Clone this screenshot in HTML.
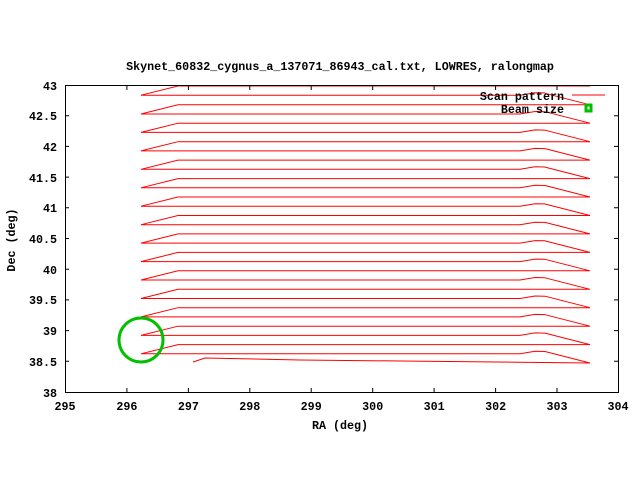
<!DOCTYPE html>
<html><head><meta charset="utf-8"><style>
html,body{margin:0;padding:0;background:#fff;}
svg{display:block}
text{font-family:"Liberation Mono","DejaVu Sans Mono",monospace;font-weight:bold;font-size:11.7px;fill:#000}
</style></head><body>
<svg width="640" height="480" viewBox="0 0 640 480" xmlns="http://www.w3.org/2000/svg">
<defs><clipPath id="c"><rect x="65" y="85" width="553" height="307"/></clipPath>
<path id="w" d="M545 -11.5L590 0L178 0L141 9.2L520 9.2L535 6.7L545 6.9" fill="none"/>
</defs>
<rect width="640" height="480" fill="#fff"/>
<text x="340" y="70" text-anchor="middle">Skynet_60832_cygnus_a_137071_86943_cal.txt, LOWRES, ralongmap</text>
<g clip-path="url(#c)" fill="none" stroke="#f00" stroke-width="1">
<use href="#w" y="86"/><use href="#w" y="104.8"/><use href="#w" y="123.2"/><use href="#w" y="141.7"/>
<use href="#w" y="160.1"/><use href="#w" y="178.6"/><use href="#w" y="197"/><use href="#w" y="215.5"/>
<use href="#w" y="233.9"/><use href="#w" y="252.4"/><use href="#w" y="270.8"/><use href="#w" y="289.3"/>
<use href="#w" y="307.7"/><use href="#w" y="326.2"/><use href="#w" y="344.6"/>
<path d="M545 351.5L590 363L400 361L300 360L205 358L193 362"/>
</g>
<circle cx="141" cy="340" r="22" fill="none" stroke="#00c000" stroke-width="3"/>
<g stroke="#000" stroke-width="1" fill="none">
<rect x="65.5" y="85.5" width="553" height="307"/>
<path d="M126.9 392v-4M188.4 392v-4M249.8 392v-4M311.2 392v-4M372.7 392v-4M434.1 392v-4M495.6 392v-4M557 392v-4
M126.9 86v4M188.4 86v4M249.8 86v4M311.2 86v4M372.7 86v4M434.1 86v4M495.6 86v4M557 86v4
M65 115.7h4M65 146.4h4M65 177.1h4M65 207.8h4M65 238.5h4M65 269.2h4M65 299.9h4M65 330.6h4M65 361.3h4
M618 115.7h-4M618 146.4h-4M618 177.1h-4M618 207.8h-4M618 238.5h-4M618 269.2h-4M618 299.9h-4M618 330.6h-4M618 361.3h-4"/>
</g>
<g text-anchor="end">
<text x="57" y="90">43</text><text x="57" y="120">42.5</text><text x="57" y="151">42</text>
<text x="57" y="182">41.5</text><text x="57" y="212">41</text><text x="57" y="243">40.5</text>
<text x="57" y="274">40</text><text x="57" y="304">39.5</text><text x="57" y="335">39</text>
<text x="57" y="366">38.5</text><text x="57" y="397">38</text>
</g>
<g text-anchor="middle">
<text x="65" y="410">295</text><text x="126.9" y="410">296</text><text x="188.4" y="410">297</text>
<text x="249.8" y="410">298</text><text x="311.2" y="410">299</text><text x="372.7" y="410">300</text>
<text x="434.1" y="410">301</text><text x="495.6" y="410">302</text><text x="557" y="410">303</text>
<text x="618" y="410">304</text>
<text x="340" y="429">RA (deg)</text>
</g>
<text x="0" y="0" text-anchor="middle" transform="translate(15 240) rotate(-90)">Dec (deg)</text>
<text x="564" y="100" text-anchor="end">Scan pattern</text>
<text x="564" y="113" text-anchor="end">Beam size</text>
<path d="M572 95H605" stroke="#f00" stroke-width="1"/>
<rect x="586" y="105" width="5" height="6" fill="none" stroke="#00c000" stroke-width="3"/>
</svg>
</body></html>
